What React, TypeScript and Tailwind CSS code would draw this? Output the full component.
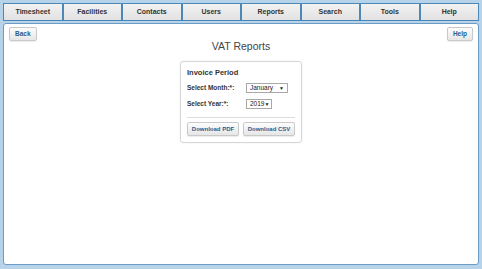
const tabs = ["Timesheet", "Facilities", "Contacts", "Users", "Reports", "Search", "Tools", "Help"];

function SmallButton({ label, grow }: { label: string; grow?: boolean }) {
    return (
        <button
            className={`${grow ? "flex-1 min-w-0 px-0 text-[6px]" : "px-[5px] text-[6.5px]"} h-[14px] whitespace-nowrap rounded-[2px] border border-[#c9c9c9] bg-gradient-to-b from-[#fdfdfd] to-[#e6e6e6] font-bold text-[#2a5d8f] leading-none shadow-[0_1px_1px_rgba(0,0,0,0.08)]`}
        >
            {label}
        </button>
    );
}

function Select({ value, width }: { value: string; width: string }) {
    return (
        <div
            className={`${width} h-[10px] flex items-center justify-between pl-[3px] pr-[3px] border border-[#a9a9a9] bg-white text-[6.5px] text-[#222] leading-none`}
        >
            <span>{value}</span>
            <span className="text-[5px]">▼</span>
        </div>
    );
}

export default function App() {
    return (
        <div
            className="w-[482px] h-[269px] bg-[#b6d3ea] px-[3px] pt-[3px] pb-[4px] flex flex-col gap-[2px]"
            style={{ fontFamily: '"Liberation Sans", Arial, sans-serif' }}
        >
            {/* Tabs */}
            <div className="flex h-[18px]">
                {tabs.map((t) => (
                    <div
                        key={t}
                        className="flex-1 flex items-center justify-center border border-[#4d87b9] bg-gradient-to-b from-[#f2f2f2] to-[#e2e2e2] text-[7px] font-bold text-[#333]"
                    >
                        {t}
                    </div>
                ))}
            </div>
            {/* Main panel */}
            <div className="flex-1 bg-white border border-[#6b9cc6] rounded-[3px] px-[5px] pt-[3px] flex flex-col">
                <div className="flex justify-between">
                    <SmallButton label="Back" />
                    <SmallButton label="Help" />
                </div>
                <div className="text-center text-[10.5px] text-[#444] mt-[0px] leading-none">VAT Reports</div>
                <div className="mx-auto mt-[9px] w-[122px] border border-[#d6d6d6] rounded-[3px] px-[6px] pt-[7px] pb-[6px] shadow-[0_0_2px_rgba(0,0,0,0.08)]">
                    <div className="text-[7.5px] font-bold text-[#333] leading-none">Invoice Period</div>
                    <div className="flex items-center mt-[7px]">
                        <span className="w-[59px] text-[6.5px] font-bold text-[#333]">Select Month:*:</span>
                        <Select value="January" width="w-[42px]" />
                    </div>
                    <div className="flex items-center mt-[6px]">
                        <span className="w-[59px] text-[6.5px] font-bold text-[#333]">Select Year:*:</span>
                        <Select value="2019" width="w-[26px]" />
                    </div>
                    <div className="border-t border-[#dcdcdc] mt-[8px] mb-[4px]" />
                    <div className="flex gap-[4px]">
                        <SmallButton label="Download PDF" grow />
                        <SmallButton label="Download CSV" grow />
                    </div>
                </div>
            </div>
        </div>
    );
}
